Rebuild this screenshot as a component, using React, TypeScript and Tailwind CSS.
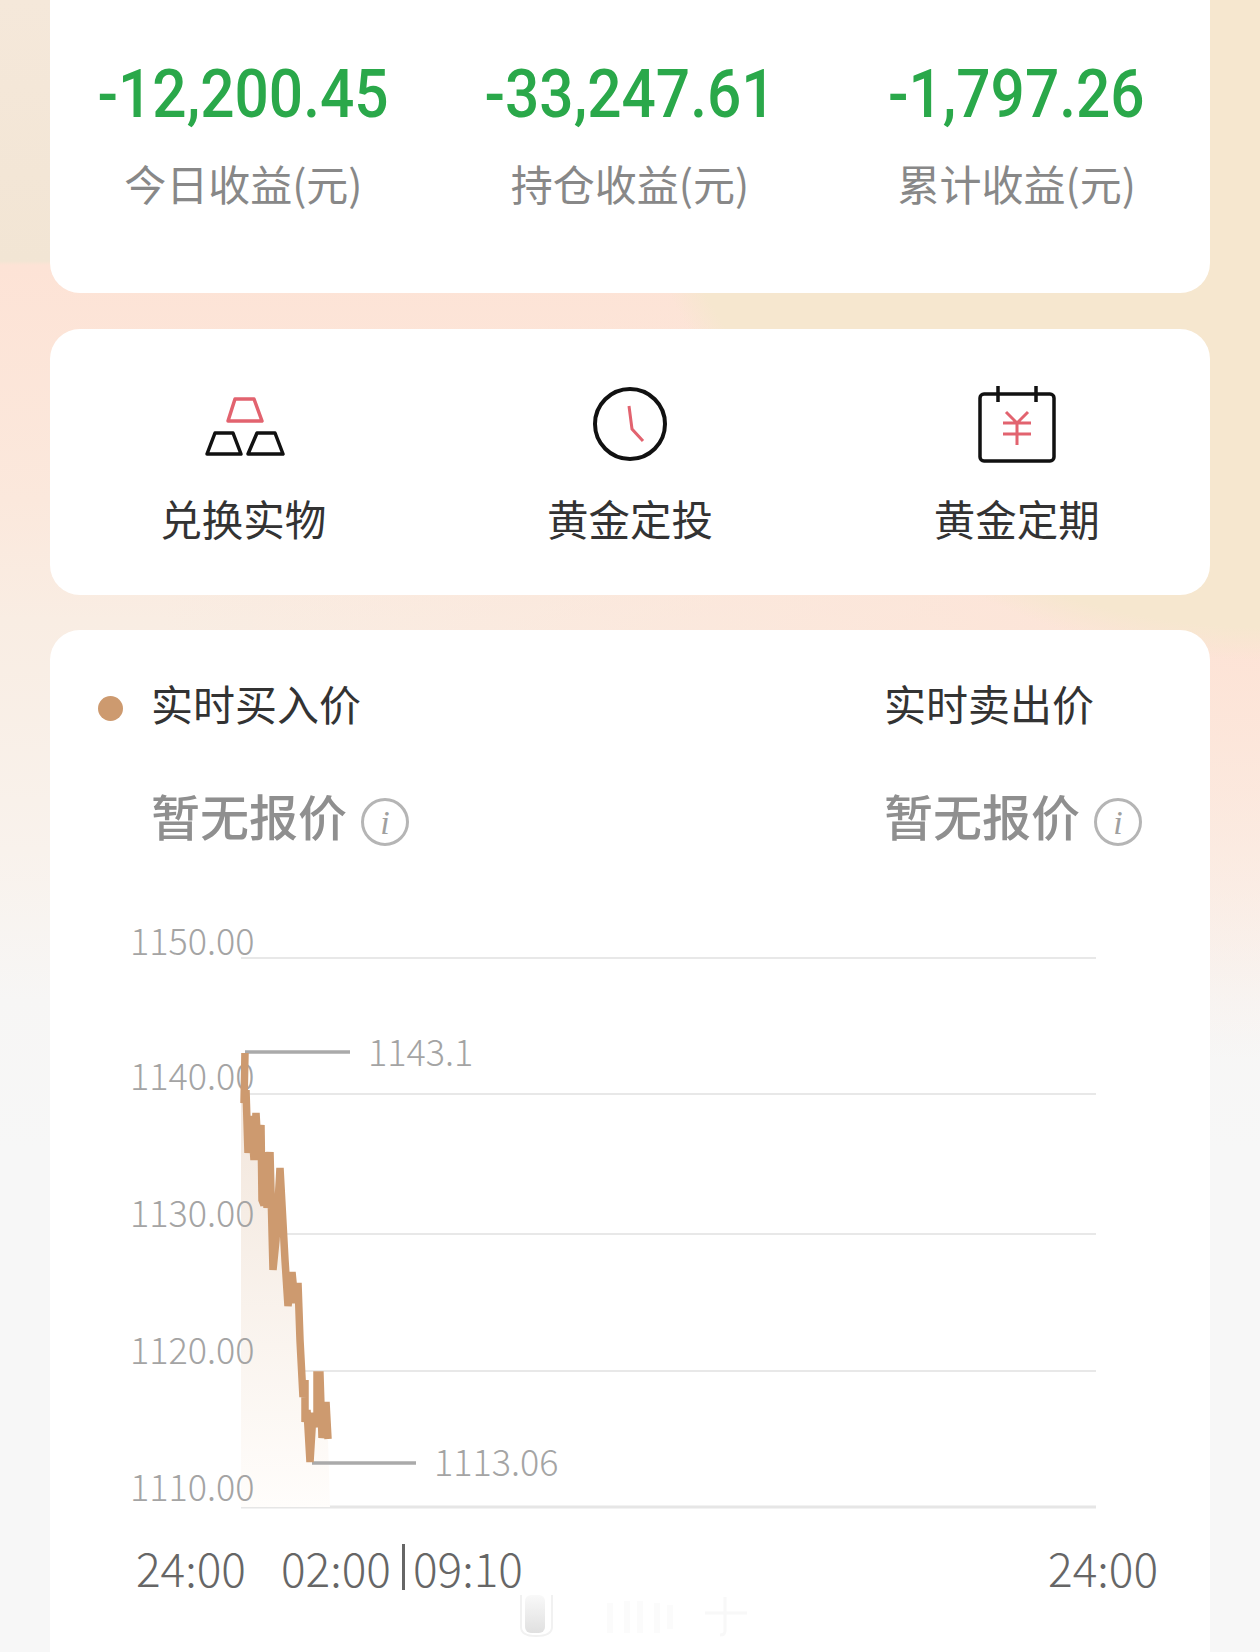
const cjk = '"Noto Sans CJK SC", "Noto Sans", sans-serif';

const stats = [
  { value: '-12,200.45', label: '今日收益(元)' },
  { value: '-33,247.61', label: '持仓收益(元)' },
  { value: '-1,797.26', label: '累计收益(元)' },
];

const gridLines = [
  { y: 958, labelY: 955, label: '1150.00' },
  { y: 1094, labelY: 1090, label: '1140.00' },
  { y: 1234, labelY: 1227, label: '1130.00' },
  { y: 1371, labelY: 1364, label: '1120.00' },
  { y: 1507, labelY: 1501, label: '1110.00' },
];

// price line, in page px minus the chart's origin
const CHART_TOP = 900;
const pricePoints = [
  [245, 1053], [244, 1103], [246, 1090], [248, 1153], [251, 1116], [254, 1160], [256, 1113],
  [258, 1150], [261, 1125], [262, 1200], [264, 1205], [266, 1152], [267, 1208], [270, 1152],
  [273, 1270], [276, 1240], [280, 1168], [285, 1260], [288, 1306], [292, 1272], [295, 1303],
  [298, 1283], [300, 1340], [303, 1397], [305, 1380], [305, 1422], [307, 1410], [310, 1462],
  [313, 1413], [317, 1427], [317, 1375], [320, 1375], [322, 1438], [326, 1402], [328, 1439],
];
const linePoints = pricePoints.map(([x, y]) => `${x},${y - CHART_TOP}`).join(' ');
const areaPoints = `241,${1053 - CHART_TOP} ${linePoints} 330,${1507 - CHART_TOP} 241,${1507 - CHART_TOP}`;

function GoldIcon() {
  return (
    <svg width="84" height="64" viewBox="0 0 84 64" fill="none" strokeWidth="3.5" strokeLinejoin="round">
      <path d="M34 2 H53 L61 24 H27 Z" stroke="#e2636f" />
      <path d="M14 36 H32 L40 57 H6 Z" stroke="#111" />
      <path d="M56 36 H74 L82 57 H47 Z" stroke="#111" />
    </svg>
  );
}

function ClockIcon() {
  return (
    <svg width="76" height="76" viewBox="0 0 76 76" fill="none" strokeWidth="4">
      <circle cx="38" cy="38" r="35" stroke="#111" />
      <path d="M37 20 L40 43 L51 55" stroke="#e2636f" strokeWidth="3" />
    </svg>
  );
}

function CalendarIcon() {
  return (
    <svg width="78" height="78" viewBox="0 0 78 78" fill="none" strokeWidth="3.5">
      <rect x="2" y="9" width="74" height="67" rx="4" stroke="#111" />
      <path d="M20 1 V17 M58 1 V17" stroke="#111" />
      <path d="M28 27 L39 38 L50 27 M25 38 H53 M25 49 H53 M39 38 V60" stroke="#e2636f" strokeWidth="3" />
    </svg>
  );
}

function InfoIcon() {
  return (
    <span
      className="flex h-[48px] w-[48px] items-center justify-center rounded-full border-[3px] border-[#b5b5b5] text-[34px] italic text-[#a0a0a0]"
      style={{ fontFamily: '"Liberation Serif", serif' }}
    >
      i
    </span>
  );
}

function Quote({ title, dot }: { title: string; dot?: boolean }) {
  return (
    <div className="relative">
      {dot && <span className="absolute left-[-53px] top-[28px] h-[25px] w-[25px] rounded-full bg-[#cd9a6f]" />}
      <div className="mt-[-3px] mb-[3px] text-[42px] leading-[70px] text-[#333]">{title}</div>
      <div className="mt-[42px] flex items-center gap-[14px]">
        <span className="text-[49px] font-medium leading-[70px] text-[#8f8f8f]">暂无报价</span>
        <span className="mt-[14px]">
          <InfoIcon />
        </span>
      </div>
    </div>
  );
}

function Chart() {
  return (
    <svg width="1260" height="620" viewBox="0 0 1260 620" className="ml-[-50px] block max-w-none" style={{ fontFamily: cjk }}>
      <defs>
        <linearGradient id="area" x1="0" y1="0" x2="0" y2="1">
          <stop offset="0" stopColor="#f1e4d9" />
          <stop offset="1" stopColor="#fffdfb" />
        </linearGradient>
      </defs>
      {gridLines.map((g, i) => (
        <line
          key={g.y}
          x1="241"
          x2="1096"
          y1={g.y - CHART_TOP}
          y2={g.y - CHART_TOP}
          stroke={i === 4 ? '#e6e6e6' : '#e8e8e8'}
          strokeWidth={i === 4 ? 3 : 2}
        />
      ))}
      <polygon points={areaPoints} fill="url(#area)" />
      {gridLines.map((g) => (
        <text key={g.label} x="130" y={g.labelY - CHART_TOP} fontSize="36" fontWeight="300" fill="#a4a4a4">
          {g.label}
        </text>
      ))}
      <path d={`M245 ${1052 - CHART_TOP} H350 M312 ${1463 - CHART_TOP} H416`} stroke="#aaa" strokeWidth="3.5" fill="none" />
      <polyline points={linePoints} fill="none" stroke="#cd9a6f" strokeWidth="7.5" strokeLinejoin="miter" strokeMiterlimit="2" />
      <text x="368" y={1066 - CHART_TOP} fontSize="36" fontWeight="300" fill="#a4a4a4">1143.1</text>
      <text x="434" y={1476 - CHART_TOP} fontSize="36" fontWeight="300" fill="#a4a4a4">1113.06</text>
    </svg>
  );
}

function TimeAxis() {
  return (
    <div className="mt-[17px] flex items-center justify-between pl-[86px] pr-[52px] text-[46px] font-light leading-[60px] text-[#666]">
      <div className="flex items-center">
        <span>24:00</span>
        <span className="ml-[35px]">02:00</span>
        <span className="ml-[11px] h-[46px] w-[3px] bg-[#666]" />
        <span className="ml-[8px]">09:10</span>
      </div>
      <span>24:00</span>
    </div>
  );
}

// faint leftover of the image host's watermark along the bottom edge
function Watermark() {
  return (
    <svg width="240" height="50" viewBox="0 0 240 50" className="absolute bottom-[13px] left-[515px]" fill="none">
      <defs>
        <linearGradient id="pill" x1="0" y1="0" x2="0" y2="1">
          <stop offset="0" stopColor="#f9f9f9" />
          <stop offset="1" stopColor="#e0e0e0" />
        </linearGradient>
      </defs>
      <rect x="10" y="6" width="20" height="38" rx="6" fill="url(#pill)" />
      <path d="M6 6 V38 Q6 47 21 47 Q37 47 37 38 V6" stroke="#f1f1f1" strokeWidth="2" />
      <path d="M95 14 V44 M112 12 V44 M125 12 V44 M142 14 V44 M155 16 V40" stroke="#fbfbfb" strokeWidth="6" />
      <path d="M210 8 V42 Q210 46 205 46 M190 24 H232" stroke="#f8f8f8" strokeWidth="3" />
    </svg>
  );
}

export default function App() {
  return (
    <div
      className="relative h-[1652px] overflow-hidden bg-[radial-gradient(ellipse_660px_660px_at_100%_0,#f6e7cf_95%,transparent_100%),radial-gradient(ellipse_1100px_420px_at_100%_640px,#fde3d6_0%,transparent_100%),linear-gradient(180deg,#f5e8da_0px,#f2e5d4_261px,#fde3d6_265px,#fbe8dc_500px,#f9ede3_620px,#f9f2ec_850px,#f7f6f5_1000px,#f7f7f7_1150px)] px-[50px]"
      style={{ fontFamily: cjk }}
    >
      {/* Earnings */}
      <div className="grid h-[293px] grid-cols-3 rounded-b-[30px] bg-white pt-[50px]">
        {stats.map((s) => (
          <div key={s.label} className="flex flex-col items-center">
            <div
              className="origin-center scale-x-[0.915] text-[66px] font-medium leading-[90px] text-[#2aa84a]"
              style={{ fontFamily: 'Roboto, sans-serif' }}
            >
              {s.value}
            </div>
            <div className="mt-[13px] text-[42px] leading-[60px] text-[#888]">{s.label}</div>
          </div>
        ))}
      </div>

      {/* Shortcuts */}
      <div className="mt-[36px] grid h-[266px] grid-cols-3 rounded-[30px] bg-white pt-[55px]">
        <div className="flex flex-col items-center">
          <div className="flex h-[80px] items-center pt-[10px]"><GoldIcon /></div>
          <div className="mt-[24px] text-[41.5px] leading-[60px] text-[#333]">兑换实物</div>
        </div>
        <div className="flex flex-col items-center">
          <div className="flex h-[80px] items-center"><ClockIcon /></div>
          <div className="mt-[24px] text-[41.5px] leading-[60px] text-[#333]">黄金定投</div>
        </div>
        <div className="flex flex-col items-center">
          <div className="flex h-[80px] items-center"><CalendarIcon /></div>
          <div className="mt-[24px] text-[41.5px] leading-[60px] text-[#333]">黄金定期</div>
        </div>
      </div>

      {/* Live price */}
      <div className="mt-[35px] h-[1100px] rounded-[30px] bg-white pt-[41px]">
        <div className="flex pl-[101px]">
          <div className="w-[733px]"><Quote title="实时买入价" dot /></div>
          <Quote title="实时卖出价" />
        </div>
        <div className="mt-[50px]"><Chart /></div>
        <TimeAxis />
      </div>

      <Watermark />
    </div>
  );
}
